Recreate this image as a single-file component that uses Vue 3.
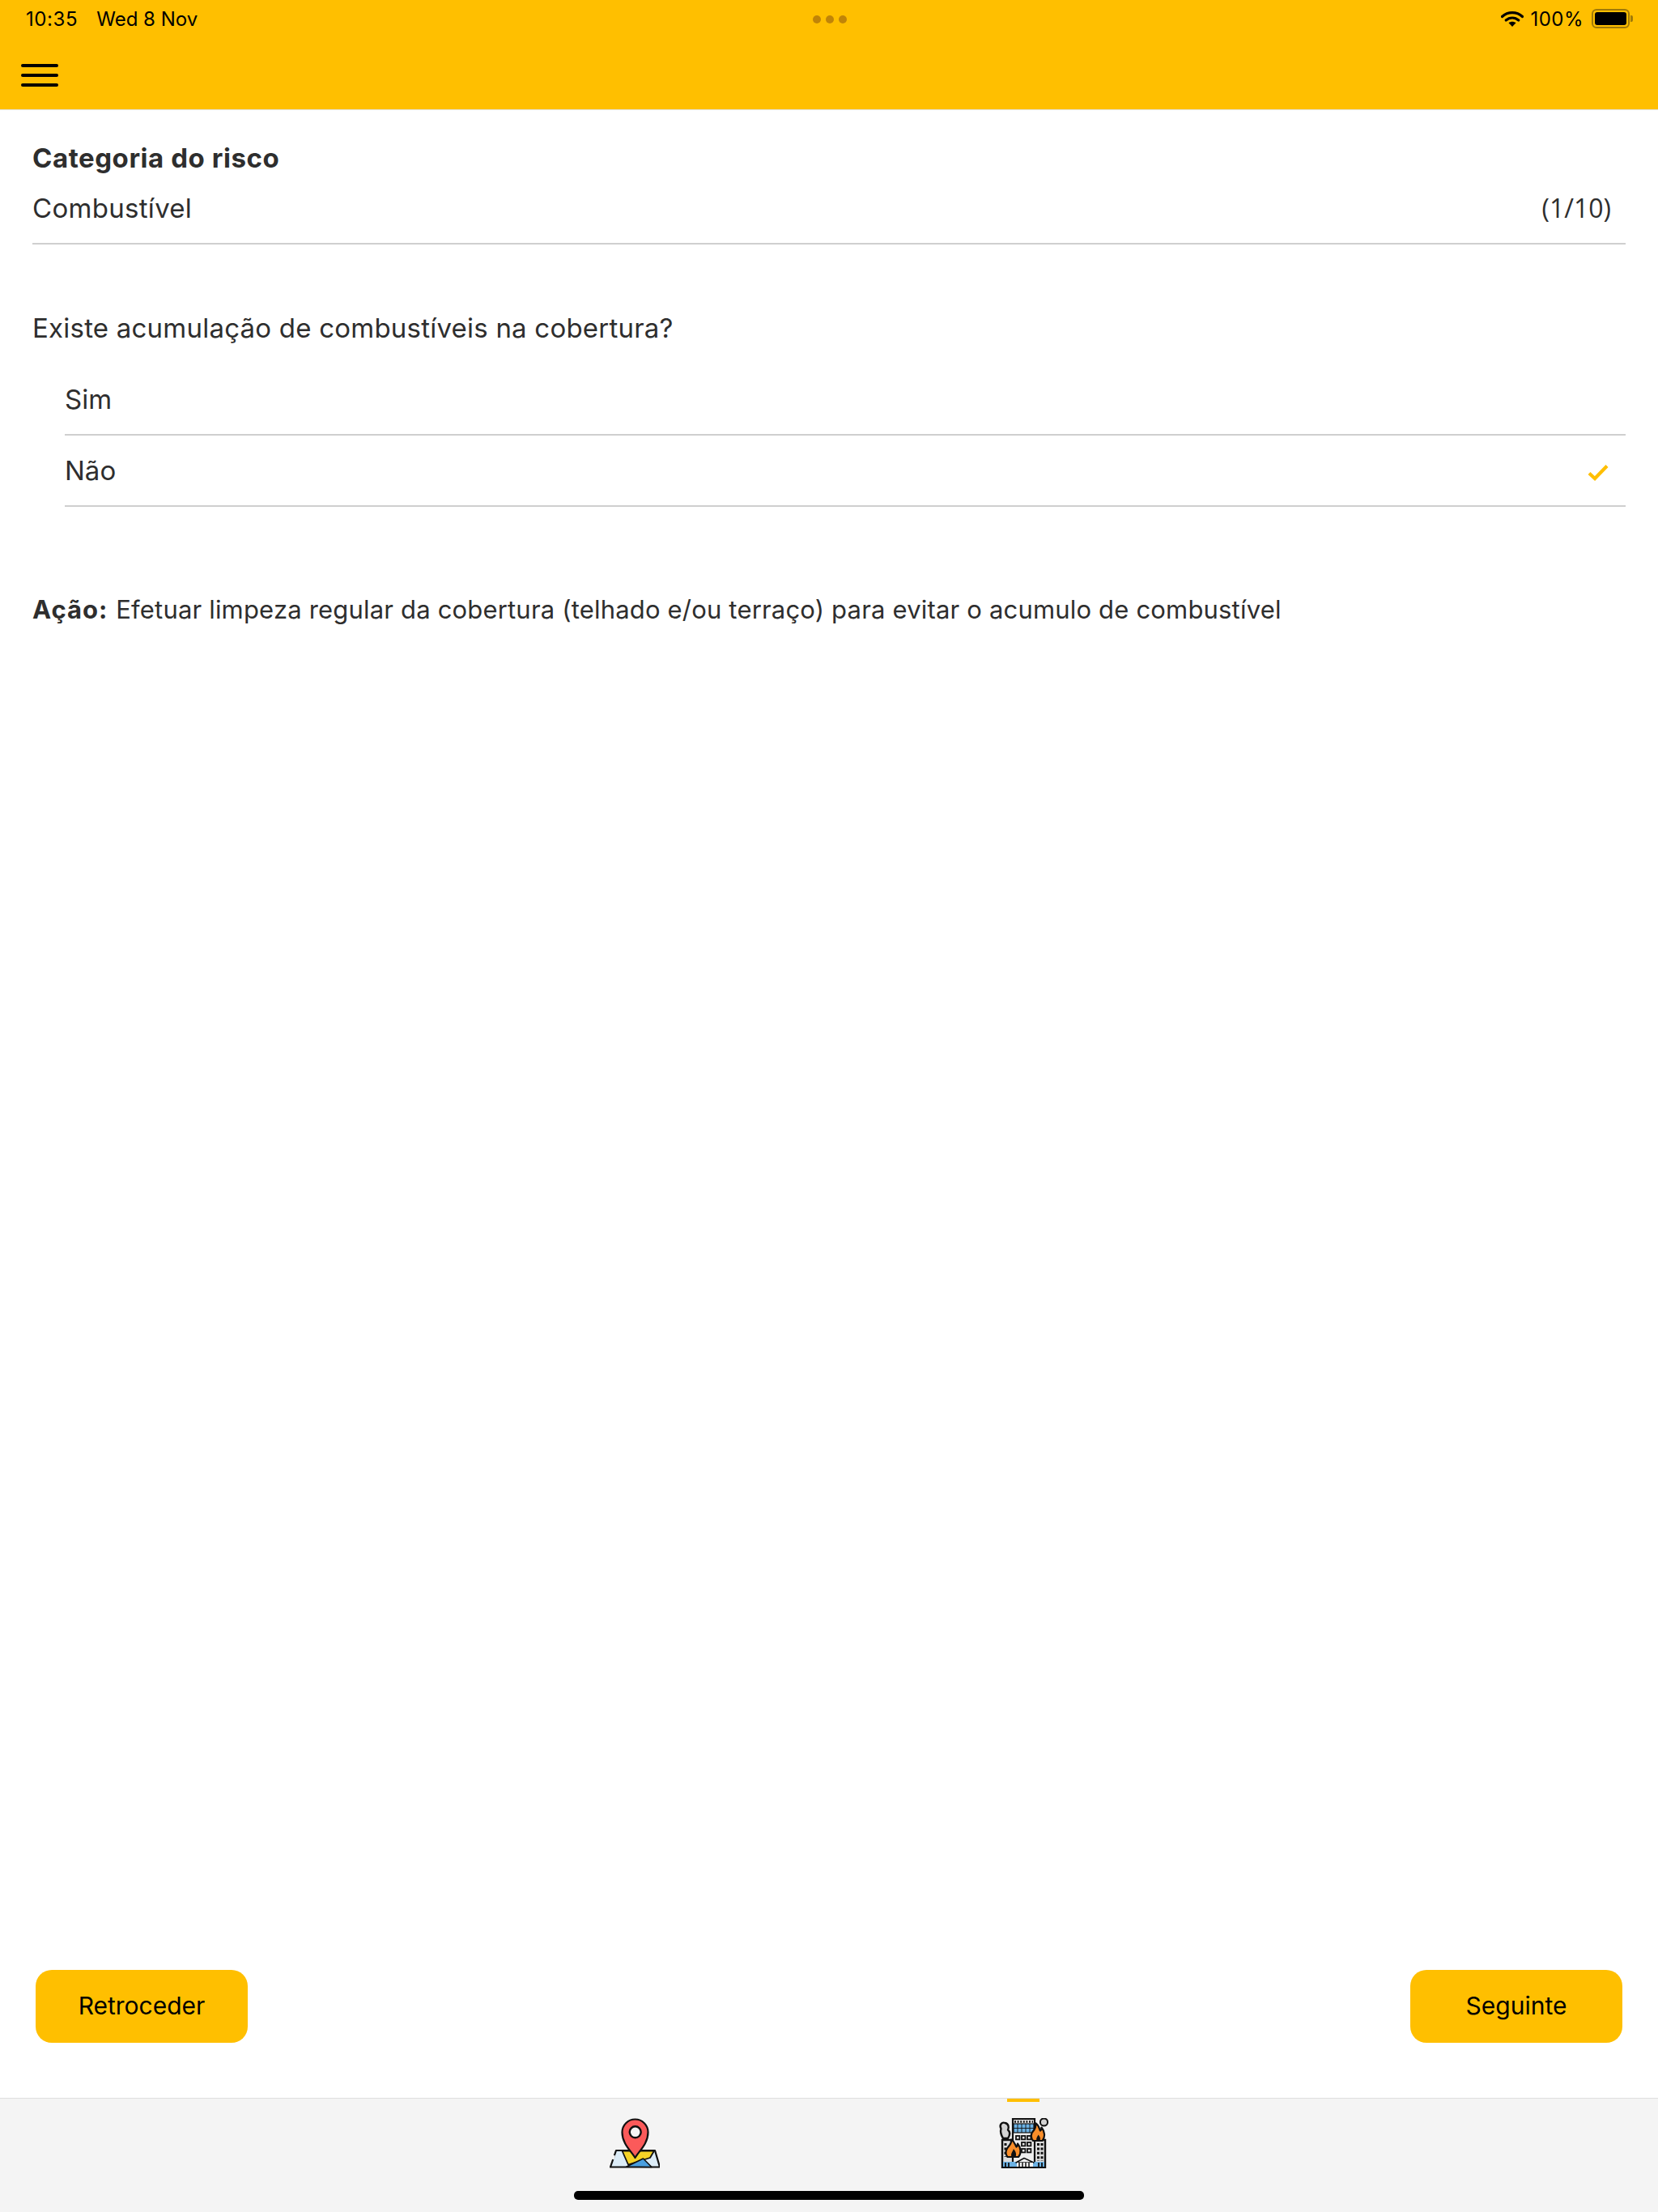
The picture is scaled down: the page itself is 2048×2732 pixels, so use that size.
<script setup>
const options = [
  { label: 'Sim', selected: false },
  { label: 'Não', selected: true },
];
</script>

<template>
  <div class="screen">
    <header class="topbar">
      <div class="status">
        <div class="status-left">
          <span class="time">10:35</span>
          <span>Wed 8 Nov</span>
        </div>
        <div class="dots"><i></i><i></i><i></i></div>
        <div class="status-right">
          <svg class="wifi" width="28" height="21" viewBox="0 0 28 21">
            <path d="M1.5 7.5C8.5 1 19.5 1 26.5 7.5" fill="none" stroke="#000" stroke-width="3.2" stroke-linecap="round" />
            <path d="M6.2 12C10.8 8 17.2 8 21.8 12" fill="none" stroke="#000" stroke-width="3.2" stroke-linecap="round" />
            <path d="M9.5 15.2 14 20 18.5 15.2C15.8 13.2 12.2 13.2 9.5 15.2Z" fill="#000" />
          </svg>
          <span class="percent">100%</span>
          <div class="battery"><div class="battery-fill"></div></div>
          <div class="battery-tip"></div>
        </div>
      </div>
      <div class="burger"><i></i><i></i><i></i></div>
    </header>

    <main class="content">
      <h1 class="category-title">Categoria do risco</h1>
      <div class="category-row">
        <span>Combustível</span>
        <span class="counter">(1/10)</span>
      </div>

      <p class="question">Existe acumulação de combustíveis na cobertura?</p>
      <ul class="options">
        <li v-for="opt in options" :key="opt.label" class="option">
          <span>{{ opt.label }}</span>
          <svg v-if="opt.selected" class="check" width="26" height="22" viewBox="0 0 26 22">
            <path d="M2 11.5 9 18 24 2.5" fill="none" stroke="#ffbf00" stroke-width="4.2" />
          </svg>
        </li>
      </ul>

      <p class="action"><b>Ação:</b> Efetuar limpeza regular da cobertura (telhado e/ou terraço) para evitar o acumulo de combustível</p>

      <div class="buttons">
        <button class="btn">Retroceder</button>
        <button class="btn">Seguinte</button>
      </div>
    </main>

    <footer class="tabbar">
      <div class="tab">
        <svg width="62" height="62" viewBox="0 0 62 62">
          <!-- map -->
          <path d="M8 40H56L62 60.5H1Z" fill="#dcecf7" stroke="#111" stroke-width="2.2" stroke-linejoin="round" />
          <path d="M5.5 46 4 51" stroke="#f4f4f4" stroke-width="3" />
          <path d="M15.5 40.5H55L50 49 23 57.5Z" fill="#f5d327" stroke="#111" stroke-width="1.8" stroke-linejoin="round" />
          <path d="M21 60 41.5 50 52 60.5Z" fill="#4a9fdf" stroke="#111" stroke-width="1.6" stroke-linejoin="round" />
          <!-- pin -->
          <path d="M31.5 49C27 41 15.5 32 15.5 17.5A16 16 0 0 1 47.5 17.5C47.5 32 36 41 31.5 49Z" fill="#fb5a5a" stroke="#111" stroke-width="2.2" stroke-linejoin="round" />
          <circle cx="31.7" cy="17.3" r="7" fill="#f5f5f5" stroke="#111" stroke-width="2.4" />
        </svg>
      </div>
      <div class="tab active">
        <svg width="62" height="62" viewBox="0 0 62 62">
          <!-- smoke -->
          <path d="M3.5 13C1 8.5 4.5 4.5 8.5 6 13 7 13.5 12 12 14.5 15.5 17.5 14 22 12 25H6C3.5 21 2.5 16.5 3.5 13Z" fill="#d3d3d3" stroke="#111" stroke-width="2.4" stroke-linejoin="round" />
          <circle cx="56.5" cy="5" r="4.6" fill="#d3d3d3" stroke="#111" stroke-width="2" />
          <!-- side blocks -->
          <rect x="5" y="27" width="53" height="34" fill="#dedede" stroke="#111" stroke-width="2.4" />
          <path d="M49.5 31V53M54 31V53" stroke="#111" stroke-width="3" stroke-dasharray="3 2.4" fill="none" />
          <path d="M9 31V48" stroke="#111" stroke-width="3" stroke-dasharray="3 2.4" fill="none" />
          <!-- tower -->
          <rect x="18" y="1" width="27" height="60" fill="#efefef" stroke="#111" stroke-width="2.2" />
          <rect x="19" y="7" width="25" height="11" fill="#6cb2e4" stroke="#111" stroke-width="1.2" />
          <path d="M20 4.5H43" stroke="#111" stroke-width="2.4" stroke-dasharray="2 1.6" fill="none" />
          <path d="M19 12.5H44M24 7V18M29 7V18M34 7V18M39 7V18" stroke="#111" stroke-width="0.9" fill="none" />
          <g fill="#e8e8e8" stroke="#111" stroke-width="1.8">
            <rect x="22" y="22" width="4.4" height="4.4" />
            <rect x="29" y="22" width="4.4" height="4.4" />
            <rect x="36" y="22" width="4.4" height="4.4" />
            <rect x="29" y="30" width="4.4" height="4.4" />
            <rect x="36" y="30" width="4.4" height="4.4" />
            <rect x="29" y="38" width="4.4" height="4.4" />
            <rect x="36" y="38" width="4.4" height="4.4" />
          </g>
          <!-- ground floor -->
          <rect x="6" y="54" width="51" height="6" fill="#6cb2e4" />
          <path d="M9 55V60M13 55V60M50 55V60M54 55V60" stroke="#111" stroke-width="1.8" fill="none" />
          <path d="M22 55 32 49.5 44 55Z" fill="#f5f5f5" stroke="#111" stroke-width="1.6" stroke-linejoin="round" />
          <rect x="23" y="55" width="20" height="5.5" fill="#f5f5f5" />
          <path d="M26 55V60.5M30 55V60.5M34 55V60.5M38 55V60.5" stroke="#111" stroke-width="1.5" fill="none" />
          <path d="M5 61H58" stroke="#111" stroke-width="2.2" />
          <!-- flames -->
          <path d="M43 28C38.5 22 41.5 17.5 44.5 14.5 46.5 11.5 46.5 8.5 45.5 6 51 9 50.5 13.5 52 15.5 53.5 14.5 53.5 13 53.5 11.5 57.5 16.5 58.5 23.5 54.5 28Z" fill="#f98e2a" stroke="#111" stroke-width="2.2" stroke-linejoin="round" />
          <path d="M47.5 28C46.5 24.5 48.5 23 49.5 20.5 52 23 52.5 25.5 51.5 28Z" fill="#111" />
          <path d="M11.5 48C7 42 11 37 14 33.5 16 31 16.5 29 16 26.5 21 29.5 21 33.5 22.5 35.5 24 34.5 24 33 24 31.5 28 36.5 29 43.5 25 48Z" fill="#f98e2a" stroke="#111" stroke-width="2.2" stroke-linejoin="round" />
          <path d="M16.5 48C15 43.5 18 41.5 19 38 21.5 41 23 44.5 21.5 48Z" fill="#111" />
        </svg>
      </div>
      <div class="home-indicator"></div>
    </footer>
  </div>
</template>

<style scoped>
.screen {
  width: 2048px;
  height: 2732px;
  display: flex;
  flex-direction: column;
  background: #fff;
  font-family: Inter, "Liberation Sans", sans-serif;
  color: #2e2e2e;
}

/* top bar */
.topbar {
  height: 135px;
  flex: none;
  background: #ffbf00;
  border-bottom: 1px solid #e2e2e2;
  box-sizing: content-box;
}
.status {
  height: 46px;
  padding: 0 31px 0 32px;
  display: flex;
  align-items: center;
  justify-content: space-between;
  font-size: 24px;
  color: #000;
}
.status-left {
  display: flex;
  gap: 23px;
  width: 400px;
}
.time {
  letter-spacing: 0.6px;
}
.status-right {
  width: 400px;
  display: flex;
  align-items: center;
  justify-content: flex-end;
  gap: 10px;
}
.wifi {
  margin-right: -2px;
}
.percent {
  letter-spacing: 0.5px;
}
.dots {
  display: flex;
  gap: 6px;
  margin-top: 2px;
}
.dots i {
  width: 10px;
  height: 10px;
  border-radius: 50%;
  background: #c08408;
}
.battery {
  width: 47px;
  height: 24px;
  border: 2px solid #a07a08;
  border-radius: 6px;
  padding: 2px;
  box-sizing: border-box;
}
.battery-fill {
  height: 100%;
  background: #000;
  border-radius: 3px;
}
.battery-tip {
  width: 3px;
  height: 8px;
  margin-left: -9px;
  background: #a07a08;
  border-radius: 0 2px 2px 0;
}
.burger {
  margin: 33px 0 0 26px;
  width: 46px;
  display: flex;
  flex-direction: column;
  gap: 8px;
}
.burger i {
  height: 4px;
  border-radius: 2px;
  background: #000;
}

/* body */
.content {
  flex: 1;
  padding: 0 40px;
  display: flex;
  flex-direction: column;
}
.category-title {
  margin: 38px 0 0;
  font-size: 33px;
  line-height: 42px;
  font-weight: 700;
  letter-spacing: 0.55px;
}
.category-row {
  margin-top: 20px;
  height: 64px;
  display: flex;
  justify-content: space-between;
  font-size: 33px;
  line-height: 42px;
  letter-spacing: 0.3px;
  border-bottom: 2px solid #cfcfcf;
  padding-right: 18px;
}
.counter {
  font-family: "Open Sans", sans-serif;
  font-size: 32px;
  letter-spacing: 0;
}
.question {
  margin: 82px 0 0;
  font-size: 33px;
  line-height: 42px;
  letter-spacing: 0.22px;
}
.options {
  list-style: none;
  margin: 24px 0 0 40px;
  padding: 0;
}
.option {
  height: 88px;
  display: flex;
  align-items: center;
  justify-content: space-between;
  padding-right: 21px;
  font-size: 33px;
  border-bottom: 2px solid #cfcfcf;
  box-sizing: border-box;
}
.check {
  margin-top: 6px;
}
.action {
  margin: 106px 0 0;
  font-size: 31px;
  line-height: 42px;
  letter-spacing: 0.18px;
}
.action b {
  font-weight: 700;
  letter-spacing: 1px;
  margin-right: 1px;
}
.buttons {
  margin-top: auto;
  margin-bottom: 68px;
  padding: 0 4px;
  display: flex;
  justify-content: space-between;
}
.btn {
  width: 262px;
  height: 90px;
  padding: 0 0 2px;
  border: none;
  border-radius: 20px;
  background: #ffbf00;
  color: #000;
  font-family: Inter, sans-serif;
  font-size: 30px;
}

/* bottom tabs */
.tabbar {
  position: relative;
  flex: none;
  height: 141px;
  background: #f4f4f4;
  border-top: 1px solid #dfdfdf;
  display: flex;
  justify-content: center;
  gap: 418px;
  padding-top: 24px;
  box-sizing: border-box;
}
.tab {
  position: relative;
  width: 62px;
  height: 62px;
}
.tab.active::before {
  content: "";
  position: absolute;
  top: -24px;
  left: 11px;
  width: 40px;
  height: 4px;
  background: #ffbf00;
}
.home-indicator {
  position: absolute;
  left: 709px;
  bottom: 15px;
  width: 630px;
  height: 11px;
  border-radius: 5px;
  background: #000;
}
</style>
